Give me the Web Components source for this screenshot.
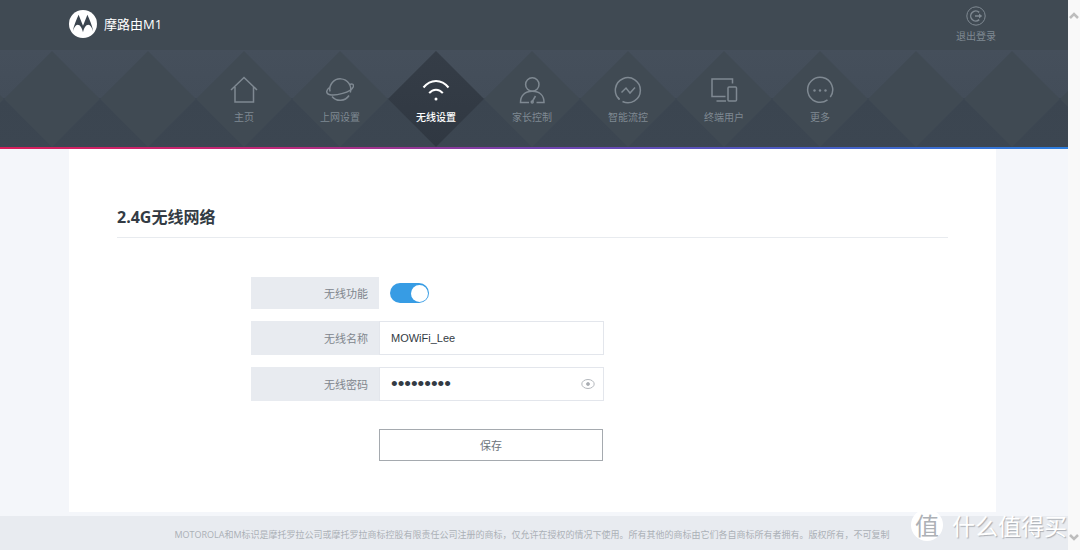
<!DOCTYPE html>
<html lang="zh-CN">
<head>
<meta charset="utf-8">
<title>摩路由M1</title>
<style>
  html, body { margin: 0; }
  body { font-family: "Open Sans", "Noto Sans CJK SC", sans-serif; background: #f4f6fa; }
</style>
</head>
<body>
<router-app>
  <router-header slot="header">摩路由M1</router-header>
  <router-nav slot="nav">
    <nav-item icon="home">主页</nav-item>
    <nav-item icon="planet">上网设置</nav-item>
    <nav-item icon="wifi" active>无线设置</nav-item>
    <nav-item icon="parent">家长控制</nav-item>
    <nav-item icon="flow">智能流控</nav-item>
    <nav-item icon="devices">终端用户</nav-item>
    <nav-item icon="more">更多</nav-item>
  </router-nav>
  <settings-card>
    <span slot="title">2.4G无线网络</span>
    <wifi-form></wifi-form>
  </settings-card>
  <router-footer slot="footer">MOTOROLA和M标识是摩托罗拉公司或摩托罗拉商标控股有限责任公司注册的商标，仅允许在授权的情况下使用。所有其他的商标由它们各自商标所有者拥有。版权所有，不可复制</router-footer>
</router-app>
<site-mark></site-mark>

<script>
function define(name, html, setup) {
  const tpl = document.createElement('template');
  tpl.innerHTML = html;
  customElements.define(name, class extends HTMLElement {
    constructor() {
      super();
      this.attachShadow({ mode: 'open' }).append(tpl.content.cloneNode(true));
    }
    connectedCallback() { if (setup) setup(this, this.shadowRoot); }
  });
}

define('scroll-rail', `
  <style>
    :host { display: flex; flex-direction: column; justify-content: space-between; align-items: center;
            background: #f9f9f9; box-sizing: border-box; padding: 11px 0 8px; }
    svg { display: block; width: 10px; height: 10px; fill: none; stroke: #bdbdbd; stroke-width: 2.500; }
  </style>
  <svg viewBox="0 0 10 10"><path d="M1 7l4-4 4 4"/></svg>
  <svg viewBox="0 0 10 10"><path d="M1 3l4 4 4-4"/></svg>`);

define('router-app', `
  <style>
    :host { display: grid; grid-template-columns: minmax(0, 1fr) 12px; min-height: 100vh; }
    .page { display: flex; flex-direction: column; min-width: 0; }
    main { flex: 1; padding: 0 72px 4px 69px; display: flex; }
    main ::slotted(*) { flex: 1; }
  </style>
  <div class="page">
    <slot name="header"></slot>
    <slot name="nav"></slot>
    <main><slot></slot></main>
    <slot name="footer"></slot>
  </div>
  <scroll-rail></scroll-rail>`);

define('router-header', `
  <style>
    :host { display: block; background: #404a53; }
    header { display: flex; justify-content: space-between; align-items: flex-start;
             height: 50px; padding: 0 72px 0 69px; box-sizing: border-box; }
    .brand { display: flex; align-items: center; gap: 7px; padding-top: 10px; color: #fff; font-size: 13px; line-height: 28px; }
    .brand svg { width: 28px; height: 28px; }
    a { display: flex; flex-direction: column; align-items: center; gap: 3px; padding-top: 6px;
        color: #7f8992; font-size: 10px; line-height: 14px; text-decoration: none; }
    a svg { width: 20px; height: 20px; fill: none; stroke: currentColor; }
  </style>
  <header>
    <div class="brand">
      <svg viewBox="0 0 28 28"><circle cx="14" cy="14" r="14" fill="#fff"/>
        <path fill="#3b454f" d="M9.600 4.800C7.500 9.500 4.700 15.500 3.800 21.800C5 18 6.600 14.800 8.700 14.800C11.200 14.800 13 18 14 22.300C15 18 16.800 14.800 19.300 14.800C21.400 14.800 23 18 24.200 21.800C23.300 15.500 20.500 9.500 18.400 4.800L14 15.800Z"/></svg>
      <slot></slot>
    </div>
    <a href="#logout">
      <svg viewBox="0 0 20 20"><circle cx="10" cy="10" r="9.200"/><path stroke-width="1.500" d="M13.200 6.400A5 5 0 1 0 13.200 13.600M9 10h5"/><path fill="currentColor" stroke="none" d="M13 7.500L16.200 10L13 12.500Z"/></svg>
      退出登录
    </a>
  </header>`);

define('router-nav', `
  <style>
    :host { display: block; }
    .band { display: grid; height: 97px; overflow: hidden; }
    .facets, nav { grid-area: 1 / 1; }
    .facets { width: 100%; height: 97px; }
    nav { display: flex; justify-content: center; padding: 1px 72px 0 68px; position: relative; }
    .line { height: 2px; background: linear-gradient(90deg, #d81e5b, #c02878 25%, #7443b0 50%, #4a5cc4 75%, #2d7fe0); }
  </style>
  <div class="band">
    <svg class="facets" aria-hidden="true">
      <defs>
        <linearGradient id="sky" x1="0" y1="0" x2="0" y2="1">
          <stop offset="0" stop-color="#454f5b"/><stop offset=".5" stop-color="#434d59"/>
          <stop offset=".5" stop-color="#3b4550"/><stop offset="1" stop-color="#3c4651"/>
        </linearGradient>
        <pattern id="tile" x="4" y="1" width="96" height="96" patternUnits="userSpaceOnUse">
          <path fill="#404a53" d="M48 0L96 48L48 96L0 48Z"/>
        </pattern>
      </defs>
      <rect width="100%" height="100%" fill="url(#sky)"/>
      <rect y="1" width="100%" height="96" fill="url(#tile)"/>
    </svg>
    <nav><slot></slot></nav>
  </div>
  <div class="line"></div>`);

const icons = {
  home: '<path d="M1 14L14 1.500L27 14M5 11V26H23.500V11"/>',
  planet: '<path d="M4 15.500A10.500 10.500 0 1 1 24.300 16.500M6 20.500A10.500 10.500 0 0 0 23 19.500"/><path d="M3.500 11.500C-.5 14.500 0 18 4 18.700C9 20 25 16.500 27.200 11C28 8.500 26.500 7 23.500 8.500"/>',
  wifi: '<g stroke-width="2"><path d="M1.500 11.500C8.500 2.800 19.500 2.800 26.500 11.500M7.200 17.200C11 12.500 17 12.500 20.800 17.200"/></g><circle cx="14" cy="23" r="1.500" fill="currentColor" stroke="none"/>',
  parent: '<circle cx="14.300" cy="8.500" r="6.700"/><path d="M11 26.500H2.500C2.500 19.500 7 15.200 14.300 15.200S26 19.500 26 26.500H18.500M14.300 25.500L17.500 20"/><circle cx="14.200" cy="26" r="1"/>',
  flow: '<path d="M5.500 23.500A12.500 12.500 0 1 1 8.500 25.500M7.500 16.500L12 12L16 17L21 11.500"/><path d="M3.800 21.300L5.500 23.500"/>',
  devices: '<path d="M22.500 7.500V3H2V20.500H15.500M6.500 25H16"/><rect x="18" y="11" width="8.500" height="14" rx="1"/>',
  more: '<path d="M24.300 21.100A12.500 12.500 0 1 0 21.500 23.900"/><g fill="currentColor" stroke="none"><circle cx="8.500" cy="14.500" r="1.200"/><circle cx="14" cy="14.500" r="1.200"/><circle cx="19.500" cy="14.500" r="1.200"/></g>'
};
define('nav-item', `
  <style>
    :host { display: block; width: 96px; color: #7f8992; }
    :host([active]) { color: #fff; }
    a { display: flex; flex-direction: column; align-items: center; gap: 6px; height: 96px; box-sizing: border-box;
        padding-top: 25px; color: inherit; text-decoration: none; font-size: 10px; line-height: 14px; }
    :host([active]) a { background: linear-gradient(#353d47, #303842); clip-path: polygon(50% 0, 100% 50%, 50% 100%, 0 50%); font-weight: 500; }
    svg { width: 28px; height: 28px; fill: none; stroke: currentColor; stroke-width: 1.500; }
  </style>
  <a href="#"><svg viewBox="0 0 28 28" aria-hidden="true"></svg><span><slot></slot></span></a>`,
  (el, root) => {
    root.querySelector('svg').innerHTML = icons[el.getAttribute('icon')];
    if (el.hasAttribute('active')) root.querySelector('a').setAttribute('aria-current', 'page');
  });

define('settings-card', `
  <style>
    :host { display: block; background: #fff; box-sizing: border-box; padding: 56px 48px 51px; }
    h1 { margin: 0 0 39px; padding-bottom: 8px; border-bottom: 1px solid #e8ebef; color: #333b44;
         font-size: 16px; line-height: 24px; font-weight: 700; }
  </style>
  <h1><slot name="title"></slot></h1>
  <slot></slot>`);

define('wifi-form', `
  <style>
    :host { display: block; color: #80868d; font-size: 11px; }
    form { display: flex; flex-direction: column; gap: 12px; max-width: 353px; margin-left: 134px; }
    .row { display: grid; grid-template-columns: 128px minmax(0, 1fr); align-items: stretch; height: 34px; }
    .row.switch { height: 32px; align-items: center; }
    label { display: flex; align-items: center; justify-content: flex-end; height: 100%; padding-right: 11px; box-sizing: border-box; background: #e8ebf0; }
    .field { display: flex; align-items: center; border: 1px solid #e3e6ec; background: #fff; padding-right: 8px; }
    input { font-family: "Liberation Sans", sans-serif; }
    .field input { flex: 1; min-width: 0; height: 32px; box-sizing: border-box; border: 0; outline: 0; background: none;
                   padding: 0 11px; font-size: 11px; color: #333b44; }
    .field input[type=password] { font-size: 19px; }
    .switch input { appearance: none; margin: 0 0 0 11px; width: 39px; height: 20px; border-radius: 10px; background: #379ce4;
                    display: flex; justify-content: flex-start; align-items: center; padding: 0 1px; box-sizing: border-box; }
    .switch input:checked { justify-content: flex-end; }
    .switch input::before { content: ""; width: 17px; height: 17px; border-radius: 50%; background: #fff; }
    .eye { border: 0; padding: 0; background: none; display: flex; }
    .eye svg { width: 14px; height: 12px; fill: none; stroke: #b4b8bd; }
    .save { margin: 16px 1px 0 128px; height: 32px; border: 1px solid #a5aaaf; background: #fff; color: #6d747b;
            font: inherit; padding: 0; }
  </style>
  <form>
    <div class="row switch"><label for="on">无线功能</label><input id="on" type="checkbox" role="switch" checked></div>
    <div class="row"><label for="ssid">无线名称</label><div class="field"><input id="ssid" type="text" value="MOWiFi_Lee"></div></div>
    <div class="row"><label for="key">无线密码</label><div class="field"><input id="key" type="password" value="mowifikey">
      <button class="eye" type="button" aria-label="显示密码"><svg viewBox="0 0 14 12"><ellipse cx="7" cy="6" rx="6.200" ry="4.500"/><circle cx="7" cy="6" r="1.500" fill="#a5aaaf"/></svg></button></div></div>
    <button class="save" type="button">保存</button>
  </form>`,
  (el, root) => {
    const key = root.getElementById('key');
    root.querySelector('.eye').onclick = () => { key.type = key.type === 'password' ? 'text' : 'password'; };
  });

define('router-footer', `
  <style>
    :host { display: block; background: #e8ebf0; color: #abb0b6; }
    footer { padding: 12px 72px 8px 68px; text-align: center; font-size: 9px; line-height: 14px; }
  </style>
  <footer><slot></slot></footer>`);

define('site-mark', `
  <style>
    :host { position: absolute; right: 13px; bottom: 9px; display: flex; align-items: center; gap: 9px;
            pointer-events: none; font-family: "Noto Sans CJK SC", sans-serif; color: #fff; }
    .seal { width: 32px; height: 32px; border-radius: 50%; background: #fff; color: #adb1b6; font-size: 24px; line-height: 32px;
            text-align: center; }
    .name { font-size: 23px; line-height: 32px; text-shadow: 1px 1px 1px #a9adb3; }
  </style>
  <span class="seal">值</span><span class="name">什么值得买</span>`);
</script>
</body>
</html>
